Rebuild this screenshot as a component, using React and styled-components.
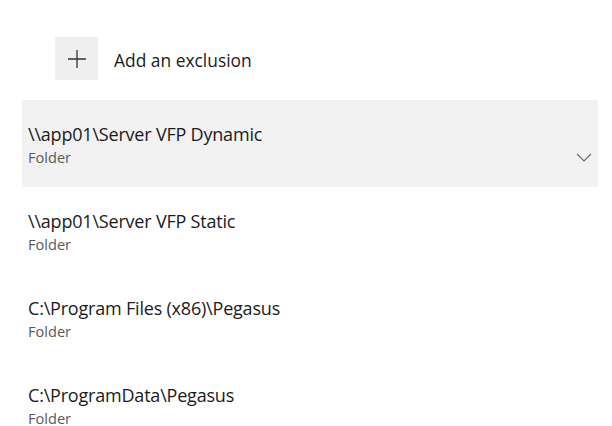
import React from 'react';
import styled, { createGlobalStyle } from 'styled-components';

const GlobalStyle = createGlobalStyle`
  body {
    margin: 0;
    background: #ffffff;
    font-family: "Open Sans", "Noto Sans", "Liberation Sans", sans-serif;
  }
`;

const Page = styled.div`
  width: 612px;
  height: 426px;
  overflow: hidden;
  padding-top: 37px;
  box-sizing: border-box;
  background: #fff;
`;

const AddRow = styled.div`
  display: flex;
  align-items: center;
  gap: 16px;
  margin-left: 55px;
`;

const AddButton = styled.div`
  width: 43px;
  height: 43px;
  background: #efefef;
  display: flex;
  align-items: center;
  justify-content: center;
`;

const AddLabel = styled.span`
  font-size: 17.4px;
  line-height: 24px;
  padding-top: 3px;
  color: #1b1b1b;
`;

const List = styled.div`
  margin: 20px 14px 0 22px;
  display: flex;
  flex-direction: column;
`;

const Row = styled.div`
  height: 87px;
  box-sizing: border-box;
  padding: 23px 6px 0 6px;
  background: ${({ selected }) => (selected ? '#f2f2f2' : 'transparent')};
  display: grid;
  grid-template-columns: 1fr auto;
  grid-template-rows: 22px 16px;
  row-gap: 4px;
`;

const Title = styled.div`
  font-size: 18px;
  line-height: 22px;
  color: #1b1b1b;
  letter-spacing: -0.2px;
`;

const Sub = styled.div`
  grid-column: 1;
  font-size: 14.6px;
  line-height: 16px;
  color: #5a5a5a;
`;

const Chevron = styled.svg`
  grid-column: 2;
  grid-row: 2;
  align-self: center;
`;

const items = [
  { path: '\\\\app01\\Server VFP Dynamic', selected: true },
  { path: '\\\\app01\\Server VFP Static' },
  { path: 'C:\\Program Files (x86)\\Pegasus' },
  { path: 'C:\\ProgramData\\Pegasus' },
];

export default function App() {
  return (
    <Page>
      <GlobalStyle />
      <AddRow>
        <AddButton>
          <svg width="20" height="20" viewBox="0 0 20 20">
            <path d="M10 1v18M1 10h18" stroke="#333" strokeWidth="1.3" fill="none" />
          </svg>
        </AddButton>
        <AddLabel>Add an exclusion</AddLabel>
      </AddRow>
      <List>
        {items.map((it) => (
          <Row key={it.path} selected={it.selected}>
            <Title>{it.path}</Title>
            <Sub>Folder</Sub>
            {it.selected && (
              <Chevron width="16" height="9" viewBox="0 0 16 9">
                <path d="M1 1l7 7 7-7" stroke="#6a6a6a" strokeWidth="1.1" fill="none" />
              </Chevron>
            )}
          </Row>
        ))}
      </List>
    </Page>
  );
}
